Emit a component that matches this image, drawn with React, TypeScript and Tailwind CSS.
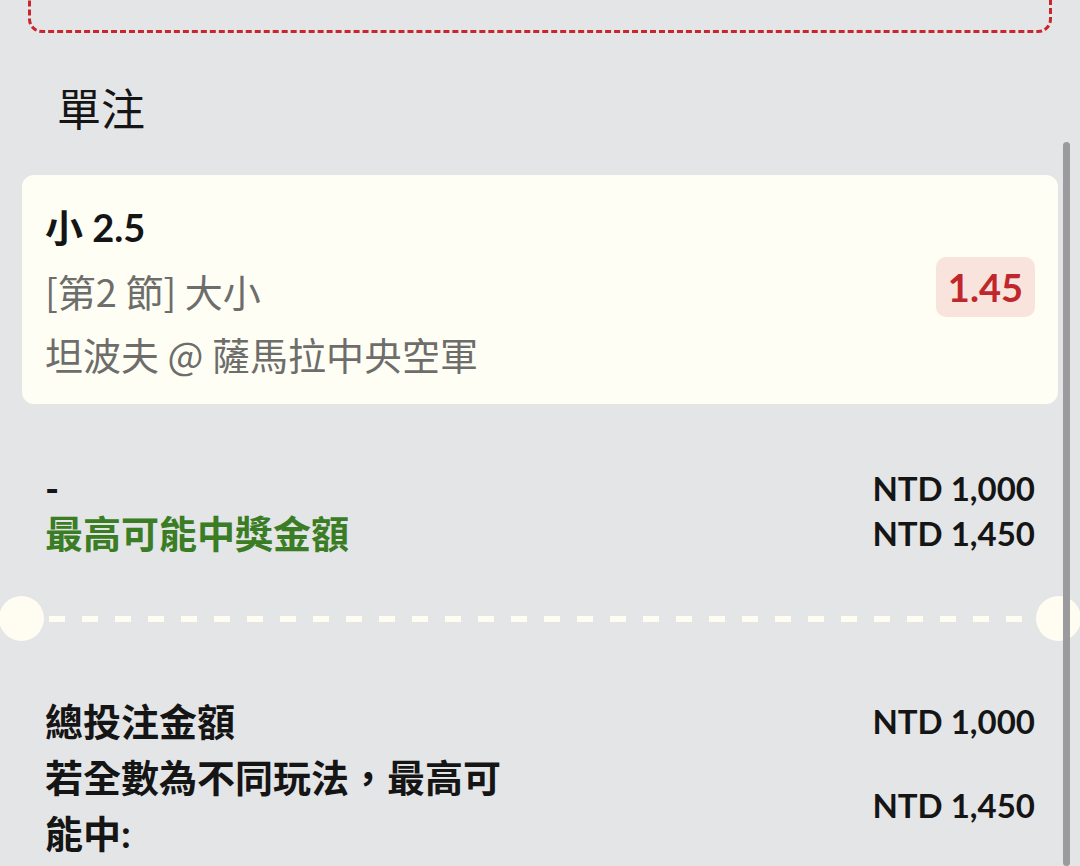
import React from "react";

// 字型: 拉丁字用 Lato，中文用 Noto Sans CJK TC
const font = "font-['Lato','Noto_Sans_CJK_TC',sans-serif]";

function Money({ value }: { value: string }) {
    return <span className="text-[33px] font-bold text-[#151515] leading-[45px]">{value}</span>;
}

export default function App() {
    return (
        <div className={`${font} relative w-[1080px] h-[866px] overflow-hidden bg-[#e4e5e7]`}>
            {/* 上方的虛線框 (只露出底部) */}
            <div className="mx-[28px] -mt-[40px] h-[73px] rounded-b-[14px] border-[3px] border-dashed border-[#c8252c]" />

            {/* 標題 */}
            <div className="mt-[50px] pl-[57px] text-[44px] leading-[52px] text-[#151515]">單注</div>

            {/* 投注卡片 */}
            <div className="mx-[22px] mt-[40px] flex items-center justify-between rounded-[12px] bg-[#fffef4] pl-[23px] pr-[23px] pt-[21px] pb-[19px]">
                <div className="flex flex-col text-[38px] leading-[63px]">
                    <span className="font-bold text-[#151515]">小 2.5</span>
                    <span className="font-['Noto_Sans_CJK_TC',sans-serif] text-[#6d6d6b]">[第2 節] 大小</span>
                    <span className="font-['Noto_Sans_CJK_TC',sans-serif] text-[#6d6d6b]">坦波夫 @ 薩馬拉中央空軍</span>
                </div>
                <div className="mt-[-8px] rounded-[10px] bg-[#f8e4dc] px-[12px] py-[6px] text-[38px] font-bold leading-[48px] text-[#bf272c]">
                    1.45
                </div>
            </div>

            {/* 可能中獎 */}
            <div className="mx-[45px] mt-[62px] flex justify-between">
                <div className="flex flex-col text-[38px] leading-[45px]">
                    <span className="font-bold text-[#151515]">-</span>
                    <span className="font-bold text-[#3a7d24]">最高可能中獎金額</span>
                </div>
                <div className="flex flex-col items-end">
                    <Money value="NTD 1,000" />
                    <Money value="NTD 1,450" />
                </div>
            </div>

            {/* 分隔線 */}
            <div className="mt-[40px] flex items-center">
                <div className="ml-[-1px] h-[45px] w-[45px] shrink-0 rounded-full bg-[#fffdf2]" />
                <div className="mx-[5px] h-[6px] flex-1 bg-[repeating-linear-gradient(to_right,#fffdf2_0_16px,transparent_16px_33px)]" />
                <div className="mr-[-1px] h-[45px] w-[45px] shrink-0 rounded-full bg-[#fffdf2]" />
            </div>

            {/* 合計 */}
            <div className="mx-[45px] mt-[52px] flex flex-col text-[38px] font-bold leading-[56px] text-[#151515]">
                <div className="flex items-center justify-between">
                    <span>總投注金額</span>
                    <Money value="NTD 1,000" />
                </div>
                <div className="flex items-center justify-between">
                    <span className="w-[480px]">若全數為不同玩法，最高可能中:</span>
                    <Money value="NTD 1,450" />
                </div>
            </div>

            {/* 捲軸 */}
            <div className="absolute right-[10px] top-[142px] bottom-0 w-[7px] rounded-full bg-[#9b9b9d]" />
        </div>
    );
}
